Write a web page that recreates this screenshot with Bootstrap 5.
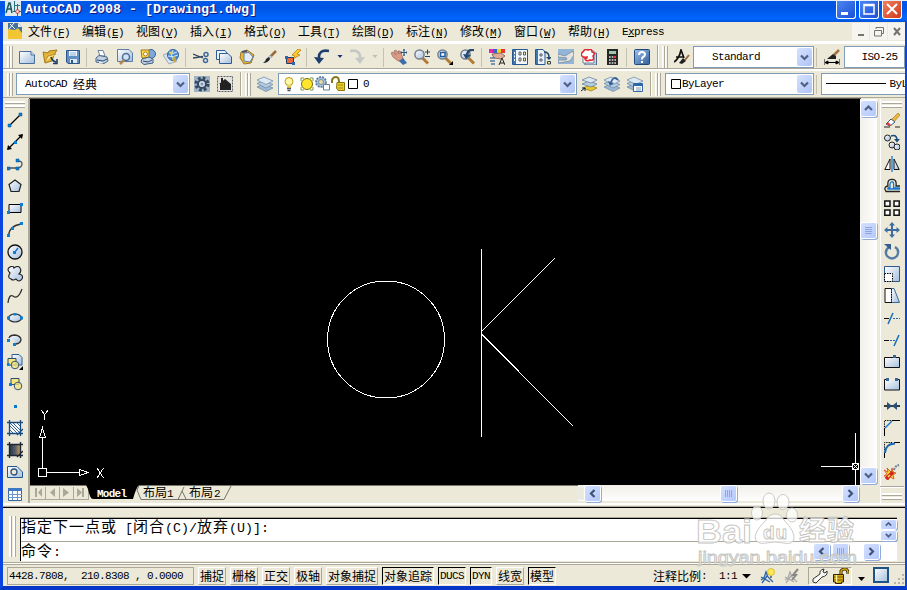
<!DOCTYPE html>
<html lang="zh-CN">
<head>
<meta charset="utf-8">
<meta name="viewport" content="width=device-width, initial-scale=1">
<title>AutoCAD 2008 - [Drawing1.dwg]</title>
<link href="https://cdn.jsdelivr.net/npm/bootstrap@5.3.0/dist/css/bootstrap.min.css" rel="stylesheet">
<style>
:root{--face:#ece9d8;--edge:#aca899;--blue:#7f9db9}
body{width:907px;height:590px;overflow:hidden;background:var(--face);color:#000;font:11px/14px "Liberation Mono","Noto Sans CJK SC",monospace}
.win{width:907px;height:590px;border:solid #0a45e0;border-width:0 2px 4px 3px;border-bottom-color:#0636c8}
.lat{font:11px/14px "Liberation Mono",monospace;letter-spacing:-.6px;white-space:pre}
.zh{font:12px/14px "Noto Sans CJK SC",sans-serif}
.titlebar{height:22px;margin:0 -2px 0 -3px;padding:0 5px 0 5px;border-top:1px solid #e8eefc;background:linear-gradient(#0058e6,#0054e3 30%,#0066ff 85%,#0050d8)}
.titlebar b{font:bold 13.33px/17px "Liberation Mono",monospace;color:#fff;text-shadow:1px 1px #0a1883;margin-left:4px;white-space:pre}
.wbs{gap:3px}
.wb{width:20px;height:18px;border:1px solid #fff;border-top:0;border-radius:0 0 3px 3px;background:linear-gradient(135deg,#4a86f0,#1c4fd8)}
.wb.shut{background:linear-gradient(135deg,#f08060,#d03a18)}
.wb svg,.mb svg,.ic,.sb svg,.dd svg{display:block}
.menubar{height:21px;padding-left:4px;border-bottom:2px solid #fff}
.mitem{width:42px;margin-right:12px;white-space:nowrap}
.mb{width:17px;height:17px;background:#f5f4ee;margin-left:1px}
.bar{height:26px;padding-top:2px;border-bottom:1px solid var(--edge);border-top:1px solid #fff}
.bar2{height:27px;padding-top:1px;border-top:2px solid #fff}
.grip{flex:none;width:6px;height:23px;margin:0 2px 0 4px;background:linear-gradient(90deg,#fff 1px,#f5f3ea 1px 2px,#aca899 2px 3px,#fff 3px 4px,#f5f3ea 4px 5px,#aca899 5px)}
.edge + .grip{margin-left:3px}
.hgrip{width:20px;height:7px;flex:none;background:linear-gradient(#fff 2px,#aca899 2px 3px,transparent 3px 4px,#fff 4px 6px,#aca899 6px)}
.ic{width:16px;height:16px;flex:none;overflow:visible}
.cell{width:23px;flex:none;display:flex;justify-content:center}
.sep{flex:none;width:6.5px;height:19px;background:linear-gradient(90deg,transparent 2px,#c5c2b0 2px 3px,transparent 3px)}
.edge{flex:none;height:25px;width:2px;margin-left:4px;border-left:1px solid var(--edge);background:#fff}
.combo{height:22px;background:#fff;border:1px solid var(--blue);flex:none;overflow:hidden}
.w-ws{width:174px;margin-left:1px;padding-left:8px}.w-lay{width:299px;margin-left:2px}.w-col{width:149px;margin-left:2px}.w-sty{width:121px;padding-left:18px}.w-dim{padding-left:17px}.w-lt{width:88px}
.dd{width:15px;height:18px;flex:none;border-radius:2px;background:linear-gradient(135deg,#d6e2ff,#aec3f5);display:flex;align-items:center;justify-content:center;margin-right:1px}
.work{height:404px}
.side{width:27px;border-right:2px solid var(--edge);padding:2px 1px 0 0}
.side .ic,.rside .ic{margin-bottom:6px}
.rside{width:25px;padding:2px 3px 0 0}
.view{width:830px;background:#000;height:386px}
.vs{width:17px;height:386px;padding:2px 0;background:linear-gradient(90deg,#f2f0ea,#fefefe)}
.vthumb{margin-bottom:124px}
.hthumb{margin-right:107px}
.sb{width:15px;height:15px;flex:none;border-radius:2px;background:linear-gradient(135deg,#d4e0ff,#b3c8fb);box-shadow:0 0 0 1px #fff,1px 1px 0 1px #91abd8;display:flex;align-items:center;justify-content:center}
.sb.half{height:9px}
.vs .sb{margin-right:1px}
.tabs{height:17px}
.tabs svg{overflow:visible}
.hs{width:282px;height:16px;padding-right:2px;background:linear-gradient(#f1efe8,#fefefe)}
.hsplit{width:6px;height:13px;margin-right:1px;background:var(--face)}
.cmdzone{height:59px;border-top:2px solid #fff;padding-top:1px}
.cmdrow{padding-top:8px}
.cmd{height:43px;width:877px;margin-top:2px;border-top:1px solid #000;border-left:1px solid #000;background:#fff;box-shadow:0 -1px #aca899}
.cmd1{height:23px;border-bottom:1px solid var(--edge);padding-right:1px}
.cmd2{height:19px;padding-right:18px}
.cmd2 .far{margin-left:16px}
.cmdl{font:13.33px/14px "Liberation Mono",monospace;white-space:pre}
.cmdl i{font:15px/14px "Noto Sans CJK SC",sans-serif;letter-spacing:1px}
.cmd2 .cmdl{width:794px}
.cmdgrip{width:8px;height:41px;margin:0 3px 0 6px;background:linear-gradient(90deg,#fff 2px,#aca899 2px 3px,transparent 3px 4px,#fff 4px 6px,#aca899 6px 7px,transparent 7px)}
.status{height:22px;padding-left:4px;background:var(--face);border-top:1px solid var(--edge);box-shadow:0 -1px #fff,0 -2px #aca899}
.coord{width:187px;height:18px;border:1px solid var(--edge);padding-left:1px;font:11px/16px "Liberation Mono",monospace;letter-spacing:-.6px;white-space:pre}
.sbtn{height:18px;border:1px solid #fff;border-right-color:#aca899;border-bottom-color:#aca899;display:flex;align-items:center;justify-content:center;margin-right:4px;width:28px;white-space:nowrap;flex:none}
.sbtn.wide{width:52px}.sbtn.slim{width:22px}
.sbtn.on{border-color:#000 #fff #fff #000}
.scale{margin-right:3px}
.tray{width:44px;height:18px;border:1px solid #aca899;border-right-color:#fff;border-bottom-color:#fff}
.logo{position:absolute;left:690px;top:488px;pointer-events:none}
</style>
<script src="https://cdn.jsdelivr.net/npm/bootstrap@5.3.0/dist/js/bootstrap.bundle.min.js"></script>
</head>
<body>
<svg width="0" height="0" class="position-absolute" aria-hidden="true">
<defs>
<linearGradient id="g" x2="1" y2="1"><stop stop-color="#fff"/><stop offset="1" stop-color="#a4bedd"/></linearGradient>
<linearGradient id="gd" x2="1" y2="1"><stop stop-color="#9fc0ea"/><stop offset="1" stop-color="#2f5f9c"/></linearGradient>
<linearGradient id="gk" x2="1"><stop stop-color="#2b3547"/><stop offset=".55" stop-color="#59606e"/><stop offset="1" stop-color="#c99a4a"/></linearGradient>
</defs>
<symbol id="new" viewBox="0 0 16 16"><path d="M.5 2.500H12L15.500 6V14.500H.5Z" fill="url(#g)" stroke="#4a6e9c"/><path d="M12 2.500V6H15.500" fill="#dce8f6" stroke="#4a6e9c"/></symbol>
<symbol id="open" viewBox="0 0 16 16"><path d="M1 3 6 4 7 2 15 1 12 6 10 12 3 14Z" fill="#e3b436" stroke="#a27a1c"/><path d="M3 13 6 7 14 5" fill="#ffe58a" stroke="#b98e2c"/><path d="M9 8Q10 12 14 13M11 14.500H15V10" fill="none" stroke="#1d3d66" stroke-width="1.600"/></symbol>
<symbol id="save" viewBox="0 0 16 16"><path d="M1.500 1.500H14.500V14.500H3L1.500 13Z" fill="#5f8fc4" stroke="#2d5688"/><path d="M4 2H12V7H4Z" fill="#eef5fc"/><path d="M5 10H12V14H5Z" fill="#dce8f4"/><path d="M6 11H8V14H6Z" fill="#2d5688"/><path d="M5 4H11M5 6H11" stroke="#8fb0d4"/></symbol>
<symbol id="print" viewBox="0 0 16 16"><path d="M4 1.500H9L11 7H6Z" fill="#fff" stroke="#69809f"/><path d="M2 9 5 6.500 13 8 14 12 10 14.500 2 13Z" fill="#c4d2e4" stroke="#48648a"/><path d="M3 11 9 12 13 10" fill="none" stroke="#294870"/><path d="M5 13.500 9 14" stroke="#fff"/></symbol>
<symbol id="preview" viewBox="0 0 16 16"><path d="M.5.5H12L15.500 4V12.500H.5Z" fill="url(#g)" stroke="#5a7ca6"/><circle cx="9" cy="8" r="3.500" fill="#cfe3f6" stroke="#506f94" stroke-width="1.500"/><path d="M7 11 3 15" stroke="#b8864a" stroke-width="2.500"/></symbol>
<symbol id="publish" viewBox="0 0 16 16"><circle cx="11" cy="5" r="4.500" fill="#7da8dc" stroke="#3c648f"/><path d="M1 1 9 1 9 9 2 9Z" fill="#ffd84a" stroke="#9a7a18"/><circle cx="5.500" cy="5" r="2" fill="#fff" stroke="#b37f1c"/><path d="M2 10 9 8 13 10 13 14 4 15.500 1 13Z" fill="#c4d2e4" stroke="#3f5a80"/><path d="M3 12 8 13 12 11" fill="none" stroke="#294870"/></symbol>
<symbol id="globe" viewBox="0 0 16 16"><path d="M0 6 8 3 14 12 6 15Z" fill="#dbe5ef" stroke="#9ba9ba"/><circle cx="10" cy="6" r="5.500" fill="#4f8fd9" stroke="#2e5e9b"/><path d="M6 3Q10 6 14 3M5 7Q10 9 15 6M10 1Q7 6 10 11" fill="none" stroke="#d5ebff"/><path d="M9 10 11 7 13 10 12 14Z" fill="#c8a83a"/><circle cx="8" cy="4" r="1.500" fill="#e7cf50"/></symbol>
<symbol id="cut" viewBox="0 0 16 16"><path d="M0 5 10 9M0 9 10 7.500" stroke="#33485f" stroke-width="1.300"/><circle cx="13" cy="5.500" r="2" fill="none" stroke="#3f6a9e" stroke-width="1.500"/><circle cx="12.500" cy="11.500" r="2" fill="none" stroke="#3f6a9e" stroke-width="1.500"/></symbol>
<symbol id="copyd" viewBox="0 0 16 16"><path d="M.5 1.500H9L11 4V10.500H.5Z" fill="#e8f1fb" stroke="#2c5c95"/><path d="M3.500 4.500H12L15.500 8V14.500H3.500Z" fill="url(#g)" stroke="#2c5c95"/></symbol>
<symbol id="paste" viewBox="0 0 16 16"><path d="M2 3 8 1 15 6 12 14 5 15 1 9Z" fill="#e8b53c" stroke="#9a7522"/><path d="M5 4 10 3.500 14 8 11 13 5 12Z" fill="#e4edf7" stroke="#6283a8"/><path d="M3 3 8 2" stroke="#556" stroke-width="2"/></symbol>
<symbol id="brush" viewBox="0 0 16 16"><path d="M8 8 14 2" stroke="#9a6b3e" stroke-width="2.500"/><path d="M9 7 6 10" stroke="#bcc3cb" stroke-width="3"/><path d="M7 8 8 10Q6 14 1 14Q4 12 4 10Z" fill="#20242a"/></symbol>
<symbol id="bolt" viewBox="0 0 16 16"><path d="M13 0 7 6 10 7 6 11 15 6 12 5 16 1Z" fill="#ffc928" stroke="#b07a00" stroke-width=".7"/><path d="M1.500 8.500H8.500V14.500H1.500Z" fill="#e6683c" stroke="#273e63"/><path d="M0 7H3V10H0ZM7 13H10V16H7Z" fill="#2c66b0"/></symbol>
<symbol id="undo" viewBox="0 0 16 16"><path d="M15 2Q4 0 5 10" fill="none" stroke="#1f3e6b" stroke-width="2.600"/><path d="M0 8 10 9 5 15Z" fill="#1f3e6b"/></symbol>
<symbol id="redo" viewBox="0 0 16 16"><path d="M1 2Q12 0 11 10" fill="none" stroke="#c5c7c4" stroke-width="2.600"/><path d="M6 9 16 8 11 15Z" fill="#c5c7c4"/></symbol>
<symbol id="tri" viewBox="0 0 8 16"><path d="M1.500 6H6.500L4 9Z" fill="currentColor"/></symbol>
<symbol id="pan" viewBox="0 0 16 16"><path d="M0 4 2 3 5 6 3 2 5 1 8 5 7 2 9 2 12 9 11 12 7 12 2 8Z" fill="#d99a86" stroke="#8e5b4c" stroke-width=".6"/><path d="M8 12 12 9 16 14 12 16Z" fill="#3e6da8"/><path d="M13 0V7M9.500 3.500H16.500M12 1H14M12 6H14M10.500 2.500V4.500M15.500 2.500V4.500" stroke="#2d5486"/></symbol>
<symbol id="mag" viewBox="0 0 16 16"><path d="M8.500 9 14 14.500" stroke="#b07c35" stroke-width="3"/><circle cx="5.500" cy="5.500" r="4.600" fill="url(#g)" stroke="#737f8c" stroke-width="1.500"/></symbol>
<symbol id="zpm" viewBox="0 0 16 16"><use href="#mag"/><path d="M11 3H16M13.500 .500V5.500M11 7.500H16" stroke="#2c4166"/></symbol>
<symbol id="zwin" viewBox="0 0 16 16"><use href="#mag"/><path d="M3.500 3.500H8V7.500H3.500Z" fill="#fff" stroke="#215c9f" stroke-width="1.500"/><path d="M16 12V16H12Z"/></symbol>
<symbol id="zprev" viewBox="0 0 16 16"><use href="#mag"/><path d="M14 1Q8 0 7 6" fill="none" stroke="#26496f" stroke-width="2.500"/><path d="M3 5 11 6 6 10Z" fill="#26496f"/></symbol>
<symbol id="props" viewBox="0 0 16 16"><path d="M0 0H4V4H0Z" fill="#e826a8"/><path d="M4 0H8V4H4Z" fill="#36c"/><path d="M8 0H12V4H8Z" fill="#f0d020"/><path d="M12 0H16V4H12Z" fill="#e33"/><path d="M3 5 12 4 16 7 12 10 5 9Z" fill="#e0ac96" stroke="#6b463c" stroke-width=".7"/><path d="M1 9H6M1 12H6M2 15H6" stroke="#5679a3" stroke-width="1.500"/><path d="M10 16 13 9 16 16M11 14H15" fill="none" stroke="#222"/></symbol>
<symbol id="dc" viewBox="0 0 16 16"><path d="M.5.5H15.500V15.500H.5Z" fill="#f4f8fd" stroke="#24588f"/><path d="M1 1H4V15H1Z" fill="#3f76b5"/><path d="M7 3H9V6H7ZM11.500 3H13.500V6H11.500ZM7 9H9V12H7ZM11.500 9H13.500V12H11.500Z" fill="#fff3a0" stroke="#4c5f75"/><path d="M2.500 3V13" stroke="#fff" stroke-dasharray="2 1.500"/></symbol>
<symbol id="tp" viewBox="0 0 16 16"><path d="M.5.5H8L10 3V15.500H.5Z" fill="#e9f2fc" stroke="#24588f"/><path d="M1 1H3V15H1Z" fill="#3f76b5"/><path d="M5 5H7V7H5ZM5 10H7V12H5Z" fill="#fff3a0" stroke="#4c5f75"/><path d="M9 3Q14 3 14 8" fill="none" stroke="#24456d" stroke-width="1.500"/><path d="M11 8H17L14 11Z" fill="#24456d"/><path d="M12.500 12.500H15.500V15H12.500Z" fill="#ffe984" stroke="#345"/></symbol>
<symbol id="ssm" viewBox="0 0 16 16"><path d="M0 0H16V15H0Z" fill="#92b5d8"/><path d="M0 5 7 7 15 2 16 6 12 12 1 14 0 11 8 11 9 9 0 8Z" fill="#e1e3e1" stroke="#748291" stroke-width=".7"/></symbol>
<symbol id="mark1" viewBox="0 0 16 16"><path d="M4 4H15.500V16H4Z" fill="#c6d4e3" stroke="#4d6989"/><path d="M2 2H13V14H2Z" fill="#fff" stroke="#6a83a0"/><path d="M2 3Q4-1 7 1Q11-1 11 3Q15 4 12 7Q14 12 9 11Q5 13 4 10Q6 10 6 8Q3 9 1 7Q-1 5 2 3" fill="#fff" stroke="#e22b32" stroke-width="1.600"/></symbol>
<symbol id="calc" viewBox="0 0 16 16"><path d="M3 0H14V16H3Z" fill="#262626"/><path d="M5 2H12V5H5Z" fill="#9cc8a8"/><path d="M5 8H12M5 11H12M5 14H12" stroke="#ddd" stroke-width="1.500" stroke-dasharray="1.700 1"/><path d="M10 7H12V9H10Z" fill="#e33"/></symbol>
<symbol id="help" viewBox="0 0 16 16"><rect x=".5" y=".5" width="15" height="15" rx="1" fill="url(#gd)" stroke="#1f4878"/><path d="M5 6Q5 3 8 3Q11 3 11 5.500Q11 7 9 8Q8 8.500 8 10.500M8 12V14" fill="none" stroke="#fff" stroke-width="2"/></symbol>
<symbol id="tstyle" viewBox="0 0 16 16"><path d="M0 13Q5 10 7 1L10 9M2 8H9" fill="none" stroke="#111" stroke-width="1.700"/><path d="M11 11 15 6" stroke="#9a6b3e" stroke-width="2"/><path d="M9 9 12 12 8 15 5 14Z" fill="#222"/></symbol>
<symbol id="dstyle" viewBox="0 0 16 16"><path d="M0 10V16M16 10V16M1 13.500H15M1 13.500 4 12V15ZM15 13.500 12 12V15Z" stroke="#000"/><path d="M10 6 15 1" stroke="#a5733b" stroke-width="2.500"/><path d="M9 5 12 7V10H3Z" fill="#222"/></symbol>
<symbol id="gear" viewBox="0 0 16 16"><path d="M0 0H16V16H0Z" fill="#9fb2c6"/><circle cx="8" cy="8" r="6" fill="none" stroke="#34495f" stroke-width="3" stroke-dasharray="2.700 2"/><circle cx="8" cy="8" r="4" fill="#d6e1ed" stroke="#34495f" stroke-width="2"/><circle cx="8" cy="8" r="1.500" fill="#8195aa"/></symbol>
<symbol id="home" viewBox="0 0 16 16"><path d="M.5.5H15.500V15.500H.5Z" fill="#e4e4dc" stroke="#56616b" stroke-dasharray="2 1"/><path d="M2 8 8 3 14 8V14H3V8Z" fill="#222"/><path d="M4 2H6V6H4Z" fill="#222"/></symbol>
<symbol id="layers" viewBox="0 0 16 16"><path d="M0 11 7 8 16 12 9 15.500Z" fill="#9db8d2" stroke="#6684a3" stroke-width=".7"/><path d="M0 7.500 7 4.500 16 8.500 9 12Z" fill="#b7cde2" stroke="#6684a3" stroke-width=".7"/><path d="M0 4 7 1 16 5 9 8.500Z" fill="#dce8f3" stroke="#6684a3" stroke-width=".7"/></symbol>
<symbol id="lay1" viewBox="0 0 16 16"><path d="M2 12 9 9 16 12 10 15Z" fill="#e8c72b" stroke="#8d7614" stroke-width=".7"/><path d="M1 8 8 5 16 8 10 11Z" fill="#b7cde2" stroke="#5c7895" stroke-width=".7"/><path d="M1 4 8 1 16 4 10 7Z" fill="#dce8f3" stroke="#5c7895" stroke-width=".7"/><path d="M0 15 4 12M1 12H4V15" stroke="#123" fill="none"/></symbol>
<symbol id="lay2" viewBox="0 0 16 16"><use href="#layers"/><path d="M14 4Q10-1 7 6" fill="none" stroke="#315f96" stroke-width="1.800"/><path d="M4 5 10 7 6 10Z" fill="#315f96"/></symbol>
<symbol id="lay3" viewBox="0 0 16 16"><use href="#layers"/><path d="M6.500 7.500H15.500V15.500H6.500Z" fill="#fff" stroke="#2e67a8"/><path d="M6 8H16V10H6Z" fill="#2e67a8"/><path d="M9 12H14M9 14H14" stroke="#7d96b2"/></symbol>
<symbol id="bulb" viewBox="0 0 12 16"><circle cx="6" cy="5.500" r="4" fill="#fff8a8" stroke="#b89617"/><path d="M4 9H8V12H4Z" fill="#e6cf52"/><path d="M4 12.500H8M4.500 14.500H7.500" stroke="#4f5560" stroke-width="1.500"/></symbol>
<symbol id="sun" viewBox="0 0 16 16"><path d="M2 2H5M11 2H14M2 14H5M11 14H14M2 2V5M14 2V5M2 11V14M14 11V14" stroke="#7d9638"/><circle cx="8" cy="8" r="5.500" fill="#ffe62a" stroke="#776c17"/></symbol>
<symbol id="sunvp" viewBox="0 0 16 16"><circle cx="6" cy="6" r="5" fill="#a9c6df" stroke="#61809e" stroke-dasharray="2 1" stroke-width="1.800"/><circle cx="6" cy="6" r="2.500" fill="#e7dba0" stroke="#7392aa"/><path d="M8.500 8.500H14.500V14H8.500Z" fill="#fff" stroke="#66809b"/></symbol>
<symbol id="lock" viewBox="0 0 16 16"><path d="M1 7V4Q2 1 5 1Q8 1 8 6" fill="none" stroke="#887817" stroke-width="2"/><path d="M6 6.500H13.500V14.500H7L5.500 12Z" fill="#e6cf2d" stroke="#8b770b"/><path d="M7 9H12M7 12H12" stroke="#a28b10"/></symbol>
<symbol id="line" viewBox="0 0 16 16"><path d="M3 13 13 3" stroke="#000" stroke-width="1.300"/><path d="M1 12H4V15H1ZM12 1H15V4H12Z" fill="#0b7fd6" stroke="#075394" stroke-width=".5"/></symbol>
<symbol id="xline" viewBox="0 0 16 16"><path d="M1 15 15 1" stroke="#000" stroke-width="1.200"/><path d="M0 16 1 11 5 15ZM16 0 11 1 15 5Z"/><path d="M7 7H10V10H7Z" fill="#0b7fd6"/></symbol>
<symbol id="pline" viewBox="0 0 16 16"><path d="M2 12H11" stroke="#000"/><path d="M11 12Q15 11 15 8Q15 5 11 5" fill="none" stroke="#555" stroke-width="1.300"/><path d="M0 11H3V14H0ZM9 11H12V14H9ZM9 3H12V6H9Z" fill="#0b7fd6" stroke="#075394" stroke-width=".5"/></symbol>
<symbol id="poly" viewBox="0 0 16 16"><path d="M8 2 14 6.500 12 13.500H4L2 6.500Z" fill="url(#g)" stroke="#222" stroke-width="1.200"/></symbol>
<symbol id="rect" viewBox="0 0 16 16"><path d="M2 4.500H14V12.500H2Z" fill="url(#g)" stroke="#000"/><path d="M0 11H3V14H0ZM13 3H16V6H13Z" fill="#0b7fd6"/></symbol>
<symbol id="arc" viewBox="0 0 16 16"><path d="M1.500 14Q2 4 14 2" fill="none" stroke="#333" stroke-width="1.300"/><path d="M0 12H3V15H0ZM13 0H16V3H13ZM4 5H7V8H4Z" fill="#0b7fd6"/></symbol>
<symbol id="circ" viewBox="0 0 16 16"><circle cx="8" cy="8" r="7" fill="url(#g)" stroke="#111" stroke-width="1.300"/><path d="M8 8 11 4" stroke="#0b6ec0" stroke-width="1.300"/><path d="M6 7H9V10H6Z" fill="#0b7fd6"/></symbol>
<symbol id="cloud" viewBox="0 0 16 16"><path d="M3 7Q-1 3 3 1Q6-1 7 2Q11-1 13 2Q15 5 12 8Q17 9 15 13Q12 17 9 13Q6 15 4 13Q0 12 3 7Z" fill="url(#g)" stroke="#222" stroke-width="1.200"/></symbol>
<symbol id="spl" viewBox="0 0 16 16"><path d="M1 15Q2 6 6 8Q11 12 15 1" fill="none" stroke="#333" stroke-width="1.300"/></symbol>
<symbol id="ell" viewBox="0 0 16 16"><ellipse cx="8" cy="8" rx="6.500" ry="4" fill="url(#g)" stroke="#222" stroke-width="1.200"/><path d="M0 6.500H3V9.500H0ZM13 6.500H16V9.500H13ZM6.500 3H9.500V5.500H6.500Z" fill="#0b7fd6"/></symbol>
<symbol id="ela" viewBox="0 0 16 16"><path d="M2 8Q2 3 8 3Q15 4 14 8Q13 12 8 12L7 8Z" fill="url(#g)"/><path d="M2 6Q3 3 8 3Q14 4 14 8Q13 12 8 12" fill="none" stroke="#333" stroke-width="1.300"/><path d="M0 7H3V10H0ZM6 11H9V14H6Z" fill="#0b7fd6"/></symbol>
<symbol id="ins" viewBox="0 0 16 16"><path d="M5 .500H12L15 3.500V11H5Z" fill="url(#g)" stroke="#2b5d95"/><path d="M1 4.500H9V11H1Z" fill="#f5e67e" stroke="#2b4d72"/><circle cx="8" cy="11" r="3.800" fill="#f0e386" fill-opacity=".8" stroke="#3d566f"/><path d="M0 9H2.500V12H0Z" fill="#0b7fd6"/><path d="M16 12V16H12Z"/></symbol>
<symbol id="blk" viewBox="0 0 16 16"><path d="M4 2.500H12V8.500H4Z" fill="#f5e67e" stroke="#2b4d72"/><circle cx="11" cy="10" r="3.800" fill="#f0e386" fill-opacity=".8" stroke="#3d566f"/><path d="M2 7H5V10H2Z" fill="#0b7fd6"/></symbol>
<symbol id="pt" viewBox="0 0 16 16"><path d="M7 7H10V10H7Z" fill="#0876c9"/></symbol>
<symbol id="hat" viewBox="0 0 16 16"><path d="M3 3H13V13H3Z" fill="#fff"/><path d="M3 6 10 13M3 3 13 13M6 3 13 10M3 10 6 13M10 3 13 6" stroke="#23588e" stroke-width=".9"/><path d="M2.500 0V16M13.500 0V16M0 2.500H16M0 13.500H16M10 15 16 9" stroke="#174b7f" stroke-width="1.300"/></symbol>
<symbol id="gra" viewBox="0 0 16 16"><path d="M3 3H13V13H3Z" fill="url(#gk)"/><path d="M2.500 0V16M13.500 0V16M0 2.500H16M0 13.500H16M10 15 16 9" stroke="#1d2735" stroke-width="1.400"/></symbol>
<symbol id="reg" viewBox="0 0 16 16"><path d="M.500 2.500H10L15.500 8V13.500H.500Z" fill="url(#g)" stroke="#215891"/><circle cx="7" cy="8" r="3" fill="#ece9d8" stroke="#2e5279" stroke-width="1.300"/></symbol>
<symbol id="tab" viewBox="0 0 16 16"><path d="M1.500 2.500H14.500V14.500H1.500Z" fill="#fff" stroke="#2e65a7"/><path d="M1 2H15V5H1Z" fill="#3e77c4"/><path d="M1 8.500H15M1 11.500H15M5.500 5V14M10.500 5V14" stroke="#6d95c8"/></symbol>
<symbol id="erase" viewBox="0 0 16 16"><path d="M6 9 14 1 16 3 9 11Z" fill="#efb638" stroke="#9b6a23" stroke-width=".6"/><path d="M2 12 7 7 11 10 6 14Z" fill="#fff" stroke="#38577c"/><path d="M2 12 4 10 7 13 6 14Z" fill="#d33"/><path d="M0 15H6M11 15H16" stroke="#222"/></symbol>
<symbol id="cpy" viewBox="0 0 16 16"><circle cx="3.500" cy="4" r="3" fill="url(#g)" stroke="#222"/><circle cx="8" cy="11" r="3" fill="url(#g)" stroke="#222"/><circle cx="13" cy="13" r="3" fill="url(#g)" stroke="#222"/><path d="M7 2Q12 0 13 5" fill="none" stroke="#174c83" stroke-width="1.600"/><path d="M10 5H16L13 8.500Z" fill="#174c83"/></symbol>
<symbol id="mir" viewBox="0 0 16 16"><path d="M6 3V13.500H.800Z" fill="#fff" stroke="#111"/><path d="M10 3V13.500H15.200Z" fill="url(#g)" stroke="#111"/><path d="M8 0V16" stroke="#1677d2" stroke-width="1.300"/></symbol>
<symbol id="off" viewBox="0 0 16 16"><path d="M16 13.500H2Q-1 9 4 8Q3 1 8 1.500Q13 1 12 8H16" fill="none" stroke="#222" stroke-width="1.300"/><path d="M16 11H4Q3 10 6 9.500V6Q7 3 9 4Q10 5 9.500 10H16" fill="none" stroke="#1677d2" stroke-width="1.300"/></symbol>
<symbol id="arr" viewBox="0 0 16 16"><path d="M.800 1H6V6.200H.800ZM10 1H15.200V6.200H10ZM.800 10H6V15.200H.800ZM10 10H15.200V15.200H10Z" fill="#fff" stroke="#111" stroke-width="1.500"/></symbol>
<symbol id="mov" viewBox="0 0 16 16"><path d="M8 0 11 3.500H9V7H12.500V5L16 8 12.500 11V9H9V12.500H11L8 16 5 12.500H7V9H3.500V11L0 8 3.500 5V7H7V3.500H5Z" fill="#3f6c9e"/></symbol>
<symbol id="rot" viewBox="0 0 16 16"><path d="M5 3Q0 7 3 12Q8 17 13 12Q16 6 11 3" fill="none" stroke="#527aa6" stroke-width="2.300"/><path d="M0 0H7V6Z" fill="#315d91"/></symbol>
<symbol id="scl" viewBox="0 0 16 16"><path d="M.500.500H15.500V15.500H.500Z" fill="url(#g)" stroke="#2d5b8c"/><path d="M.500 7.500H8.500V15.500H.500Z" fill="#fff" stroke="#000" stroke-dasharray="1.500 1"/></symbol>
<symbol id="str" viewBox="0 0 16 16"><path d="M7 .500H10L15.500 14.500H7Z" fill="url(#g)" stroke="#3a679b"/><path d="M7 .500H1V14.500H7" fill="#fff" stroke="#111"/><path d="M7.500 1V15" stroke="#000" stroke-dasharray="1.500 1"/></symbol>
<symbol id="trim" viewBox="0 0 16 16"><path d="M0 8.500H5" stroke="#111"/><path d="M9 8.500H16" stroke="#176bb8" stroke-dasharray="2 1"/><path d="M4 14 9 3" stroke="#176bb8" stroke-width="1.500"/></symbol>
<symbol id="ext" viewBox="0 0 16 16"><path d="M0 8.500H5" stroke="#111"/><path d="M6 8.500H12" stroke="#176bb8" stroke-dasharray="2 1"/><path d="M10 14 15 3" stroke="#176bb8" stroke-width="1.500"/></symbol>
<symbol id="brk1" viewBox="0 0 16 16"><path d="M.500 3.500H15.500V13.500H.500Z" fill="url(#g)" stroke="#111"/><path d="M9 1H12V4H9Z" fill="#376797"/></symbol>
<symbol id="brk2" viewBox="0 0 16 16"><path d="M4 3.500H.500V14H15.500V3.500H12" fill="url(#g)" stroke="#111"/><path d="M2 2H5V5H2ZM11 2H14V5H11Z" fill="#376797"/></symbol>
<symbol id="join" viewBox="0 0 16 16"><path d="M0 8H16" stroke="#000" stroke-width="1.500"/><path d="M3 4 8 8 3 12ZM13 4 8 8 13 12Z" fill="#274f77"/></symbol>
<symbol id="cham" viewBox="0 0 16 16"><path d="M.5 7V.500H9" fill="none" stroke="#000" stroke-dasharray="1.300 1"/><path d="M.5 16V8M8 .500H16" stroke="#000"/><path d="M1 8 8 1" stroke="#1677d2" stroke-width="1.500"/></symbol>
<symbol id="fil" viewBox="0 0 16 16"><path d="M.5 8V.500H8" fill="none" stroke="#000" stroke-dasharray="1.300 1"/><path d="M.5 16V10M10 .500H16" stroke="#000"/><path d="M1 11Q1 2 11 1.500" fill="none" stroke="#1b67ad" stroke-width="2"/></symbol>
<symbol id="expl" viewBox="0 0 16 16"><path d="M0 6 4 8 3 4 7 8 8 4 9 8 12 9 9 11 10 15 6 13 4 16 4 12 0 12 3 10Z" fill="#f9d52b" stroke="#c93a17" stroke-width=".7"/><path d="M2 15 9 8" stroke="#d42222" stroke-width="3.500"/><path d="M4 13 6 11" stroke="#ffe85a" stroke-width="1.500"/><path d="M10 6Q11 2 15 1" fill="none" stroke="#6c7b91" stroke-width="2" stroke-dasharray="2 1"/></symbol>
<symbol id="ann" viewBox="0 0 16 16"><path d="M1 12 4 10 6 4 8 9 13 14M1 9 10 14M2 15 7 8" fill="none" stroke="#2b64a5" stroke-width="1.300"/><circle cx="11" cy="4" r="3.500" fill="#ffe94f" stroke="#c3a019" stroke-width=".6"/><path d="M10 8H12V10H10Z" fill="#777"/></symbol>
<symbol id="ann2" viewBox="0 0 16 16"><path d="M1 12 4 10 6 4 8 9 13 14M1 9 10 14M2 15 7 8" fill="none" stroke="#aaa" stroke-width="1.300"/><path d="M14 1 9 7H12L8 12" fill="none" stroke="#888" stroke-width="2"/></symbol>
<symbol id="wr" viewBox="0 0 16 16"><path d="M1 14 1 11 8 6Q7 2 12 1L11 4 13 5 15 3Q16 8 10 9L4 15Z" fill="#f8f8f4" stroke="#333"/></symbol>
<symbol id="goldlock" viewBox="0 0 16 16"><path d="M8 7V3Q9 1 12 1Q15 1 15 6" fill="none" stroke="#2e2400" stroke-width="3"/><path d="M8 7V3Q9 1 12 1Q15 1 15 6" fill="none" stroke="#d3a416" stroke-width="1.500"/><path d="M.500 6.500H10.500V14H8.500V15.500H2.500V14H.500Z" fill="#d9a816" stroke="#2e2400"/><path d="M1 9H10M1 12H10" stroke="#775a05"/><path d="M3.500 7V14" stroke="#fff3a0" stroke-width="1.500"/></symbol>
<symbol id="down" viewBox="0 0 9 9"><path d="M1 2.500 4.500 6 8 2.500" fill="none" stroke="#4d6185" stroke-width="2.200"/></symbol>
<symbol id="up" viewBox="0 0 9 9"><path d="M1 6 4.500 2.500 8 6" fill="none" stroke="#4d6185" stroke-width="2.200"/></symbol>
<symbol id="lf" viewBox="0 0 9 9"><path d="M6.500 1 3 4.500 6.500 8" fill="none" stroke="#3f5278" stroke-width="2.200"/></symbol>
<symbol id="rt" viewBox="0 0 9 9"><path d="M2.500 1 6 4.500 2.500 8" fill="none" stroke="#3f5278" stroke-width="2.200"/></symbol>
<symbol id="thumb" viewBox="0 0 9 9"><path d="M1.500 1V8M3.500 1V8M5.500 1V8M7.500 1V8" stroke="#8da6e0"/></symbol>
</svg>

<main class="win d-flex flex-column">
<header class="titlebar d-flex flex-shrink-0">
<svg width="16" height="15" viewBox="0 0 16 15"><path d="M0 0H16V15H0Z" fill="#dfe9ea"/><path d="M1 12 4 2H5L7 12M2 8H7" fill="none" stroke="#195864" stroke-width="1.500"/><path d="M9.500 0V10M12.500 3V15M8 10.500H16M9 4.500H15" stroke="#2b7480"/><path d="M11 9H14V12H11Z" fill="#fff" stroke="#c33" stroke-width=".8"/></svg>
<b>AutoCAD 2008 - [Drawing1.dwg]</b>
<div class="wbs d-flex ms-auto">
<div class="wb"><svg width="18" height="17"><path d="M4 12.500H11" stroke="#fff" stroke-width="3"/></svg></div>
<div class="wb"><svg width="18" height="17"><path d="M4 3.500H14V13H4ZM4 4.500H14" fill="none" stroke="#fff" stroke-width="1.500"/></svg></div>
<div class="wb shut"><svg width="18" height="17"><path d="M4 3 14 13M14 3 4 13" stroke="#fff" stroke-width="2"/></svg></div>
</div>
</header>

<nav class="menubar d-flex align-items-center flex-shrink-0">
<svg class="me-1 flex-shrink-0" width="17" height="17" viewBox="0 0 17 17"><path d="M1 0H11L15 4V16H1Z" fill="#42729d"/><path d="M1 6 8 7 11 5 15 10V16H1Z" fill="#f1c632"/><path d="M3 1 8 6M7 0 2 6" stroke="#fff"/><path d="M11 0V4H15" fill="#e4edf4"/></svg>
<div class="mitem"><span class="zh">文件</span><span class="lat">(<u>F</u>)</span></div>
<div class="mitem"><span class="zh">编辑</span><span class="lat">(<u>E</u>)</span></div>
<div class="mitem"><span class="zh">视图</span><span class="lat">(<u>V</u>)</span></div>
<div class="mitem"><span class="zh">插入</span><span class="lat">(<u>I</u>)</span></div>
<div class="mitem"><span class="zh">格式</span><span class="lat">(<u>O</u>)</span></div>
<div class="mitem"><span class="zh">工具</span><span class="lat">(<u>T</u>)</span></div>
<div class="mitem"><span class="zh">绘图</span><span class="lat">(<u>D</u>)</span></div>
<div class="mitem"><span class="zh">标注</span><span class="lat">(<u>N</u>)</span></div>
<div class="mitem"><span class="zh">修改</span><span class="lat">(<u>M</u>)</span></div>
<div class="mitem"><span class="zh">窗口</span><span class="lat">(<u>W</u>)</span></div>
<div class="mitem"><span class="zh">帮助</span><span class="lat">(<u>H</u>)</span></div>
<span class="lat">E<u>x</u>press</span>
<div class="d-flex ms-auto">
<div class="mb"><svg width="17" height="17"><path d="M6 12H12" stroke="#777468" stroke-width="2"/></svg></div>
<div class="mb"><svg width="17" height="17"><path d="M6 6V4.500H13.500V10.500H12M4.500 7.500H11.500V13H4.500Z" fill="none" stroke="#77746b"/></svg></div>
<div class="mb"><svg width="17" height="17"><path d="M6 5 12 12M12 5 6 12" stroke="#77746b" stroke-width="2"/></svg></div>
</div>
</nav>

<div class="bar d-flex align-items-center flex-shrink-0 overflow-hidden">
<div class="grip"></div><div class="cell"><svg class="ic"><use href="#new"/></svg></div>
<div class="cell"><svg class="ic"><use href="#open"/></svg></div><div class="cell"><svg class="ic"><use href="#save"/></svg></div><div class="sep"></div>
<div class="cell"><svg class="ic"><use href="#print"/></svg></div><div class="cell"><svg class="ic"><use href="#preview"/></svg></div><div class="cell"><svg class="ic"><use href="#publish"/></svg></div><div class="cell"><svg class="ic"><use href="#globe"/></svg></div><div class="sep"></div>
<div class="cell"><svg class="ic"><use href="#cut"/></svg></div><div class="cell"><svg class="ic"><use href="#copyd"/></svg></div><div class="cell"><svg class="ic"><use href="#paste"/></svg></div><div class="cell"><svg class="ic"><use href="#brush"/></svg></div><div class="cell"><svg class="ic"><use href="#bolt"/></svg></div><div class="sep"></div>
<div class="cell"><svg class="ic"><use href="#undo"/></svg></div><svg class="flex-shrink-0" width="12" height="16"><use href="#tri" color="#1c2e78"/></svg>
<div class="cell"><svg class="ic"><use href="#redo"/></svg></div><svg class="flex-shrink-0" width="12" height="16"><use href="#tri" color="#bbb"/></svg><div class="sep"></div>
<div class="cell"><svg class="ic"><use href="#pan"/></svg></div><div class="cell"><svg class="ic"><use href="#zpm"/></svg></div><div class="cell"><svg class="ic"><use href="#zwin"/></svg></div><div class="cell"><svg class="ic"><use href="#zprev"/></svg></div><div class="sep"></div>
<div class="cell"><svg class="ic"><use href="#props"/></svg></div><div class="cell"><svg class="ic"><use href="#dc"/></svg></div><div class="cell"><svg class="ic"><use href="#tp"/></svg></div><div class="cell"><svg class="ic"><use href="#ssm"/></svg></div><div class="cell"><svg class="ic"><use href="#mark1"/></svg></div><div class="cell"><svg class="ic"><use href="#calc"/></svg></div><div class="sep"></div>
<div class="cell"><svg class="ic"><use href="#help"/></svg></div><div class="edge"></div><div class="grip"></div>
<div class="cell"><svg class="ic"><use href="#tstyle"/></svg></div>
<div class="combo w-sty d-flex align-items-center"><span class="lat flex-fill">Standard</span><div class="dd"><svg width="9" height="9"><use href="#down"/></svg></div></div>
<div class="sep"></div><div class="cell"><svg class="ic"><use href="#dstyle"/></svg></div>
<div class="combo w-dim d-flex align-items-center flex-fill"><span class="lat">ISO-25</span></div>
</div>

<div class="bar2 d-flex align-items-center flex-shrink-0 overflow-hidden">
<div class="grip"></div>
<div class="combo w-ws d-flex align-items-center"><span class="lat">AutoCAD </span><span class="zh flex-fill">经典</span><div class="dd"><svg width="9" height="9"><use href="#down"/></svg></div></div>
<div class="cell"><svg class="ic"><use href="#gear"/></svg></div><div class="cell"><svg class="ic"><use href="#home"/></svg></div>
<div class="edge"></div><div class="grip"></div>
<div class="cell"><svg class="ic"><use href="#layers"/></svg></div>
<div class="combo w-lay d-flex align-items-center ps-1"><svg class="flex-shrink-0" width="12" height="16"><use href="#bulb"/></svg><svg class="ic ms-1"><use href="#sun"/></svg><svg class="ic"><use href="#sunvp"/></svg><svg class="ic"><use href="#lock"/></svg><svg class="flex-shrink-0" width="12" height="12"><path d="M1.500 1.500H10.500V10.500H1.500Z" fill="#fff" stroke="#000"/></svg><span class="lat flex-fill ps-1">0</span><div class="dd"><svg width="9" height="9"><use href="#down"/></svg></div></div>
<div class="cell"><svg class="ic"><use href="#lay1"/></svg></div><div class="cell"><svg class="ic"><use href="#lay2"/></svg></div><div class="cell"><svg class="ic"><use href="#lay3"/></svg></div>
<div class="edge"></div><div class="grip"></div>
<div class="combo w-col d-flex align-items-center ps-1"><svg class="flex-shrink-0" width="12" height="12"><path d="M1.500 1.500H10.500V10.500H1.500Z" fill="#fff" stroke="#000"/></svg><span class="lat flex-fill">ByLayer</span><div class="dd"><svg width="9" height="9"><use href="#down"/></svg></div></div>
<div class="sep"></div>
<div class="combo w-lt d-flex align-items-center"><svg class="flex-shrink-0 ms-1" width="60" height="2"><path d="M0 .5H60" stroke="#000"/></svg><span class="lat ps-1">ByLayer</span></div>
</div>

<svg class="d-block flex-shrink-0" width="902" height="3"><path d="M0 1.500H902" stroke="#aca899"/><path d="M26 2.500H858" stroke="#55534b"/></svg>

<section class="work d-flex flex-shrink-0">
<aside class="side d-flex flex-column align-items-center flex-shrink-0">
<div class="hgrip mb-1"></div>
<svg class="ic"><use href="#line"/></svg><svg class="ic"><use href="#xline"/></svg><svg class="ic"><use href="#pline"/></svg><svg class="ic"><use href="#poly"/></svg><svg class="ic"><use href="#rect"/></svg><svg class="ic"><use href="#arc"/></svg><svg class="ic"><use href="#circ"/></svg><svg class="ic"><use href="#cloud"/></svg><svg class="ic"><use href="#spl"/></svg><svg class="ic"><use href="#ell"/></svg><svg class="ic"><use href="#ela"/></svg><svg class="ic"><use href="#ins"/></svg><svg class="ic"><use href="#blk"/></svg><svg class="ic"><use href="#pt"/></svg><svg class="ic"><use href="#hat"/></svg><svg class="ic"><use href="#gra"/></svg><svg class="ic"><use href="#reg"/></svg><svg class="ic mb-0"><use href="#tab"/></svg>
</aside>
<div class="d-flex flex-column flex-shrink-0">
<div class="d-flex">
<svg class="view d-block" viewBox="30 99 830 386" fill="none" stroke="#fff" shape-rendering="crispEdges">
<circle cx="386" cy="339.500" r="58.500"/><path d="M481.500 249V437M555 258 481.500 331.500M481.500 334 573 426"/>
<path d="M38.500 468.500H46.500V476.500H38.500ZM42.500 468V438M46 472.500H79M42.500 428 39.500 437.500H45.500ZM88 472.500 79.500 469.500V475.500ZM44.500 415V420M41.500 410 44.500 415 48 410M97 468 103.500 478M103.500 468 97 478"/>
<path d="M821 466.500H852M855.500 433V463M855.500 470V485M852.500 463.500H858.500V469.500H852.500ZM853 464 858 469M858 464 853 469"/>
</svg>
<div class="vs d-flex flex-column align-items-center justify-content-between"><div class="sb"><svg width="9" height="9"><use href="#up"/></svg></div><div class="sb vthumb"><svg width="9" height="9"><path d="M1 1.500H8M1 3.500H8M1 5.500H8M1 7.500H8" stroke="#8da6e0"/></svg></div><div class="sb"><svg width="9" height="9"><use href="#down"/></svg></div></div>
</div>
<div class="tabs d-flex">
<svg class="d-block flex-shrink-0" width="548" height="17" viewBox="30 485 548 17">
<path d="M30 485.500H578" stroke="#77746b"/>
<g fill="none" stroke="#aca899"><path d="M45.500 487V499M59.500 487V499M73.500 487V499M88.500 487V499M31 499.500H89"/></g>
<g fill="#aca899"><path d="M35 488H37V497H35ZM42 488V497L38 492.500ZM55 488V497L50 492.500ZM63 488V497L69 492.500ZM77 488V497L82 492.500ZM82 488H84V497H82Z"/></g>
<path d="M86 485H139Q136 488 133 499H93Q90 499 88 489Z" fill="#000"/>
<path d="M139 486 137 490 141 499.500H178L184 487M178 499.500H224L231 486M182 491 186 499" fill="none" stroke="#77746b"/>
<g font-family="Liberation Mono,monospace" font-size="11"><text x="97" y="497" fill="#fff" font-weight="bold" textLength="30">Model</text><text x="167" y="497">1</text><text x="214" y="497">2</text></g>
<g font-family="Noto Sans CJK SC,sans-serif" font-size="12"><text x="143" y="497">布局</text><text x="189" y="497">布局</text></g>
</svg>
<div class="hs d-flex align-items-center"><span class="hsplit border border-secondary-subtle"></span><div class="sb"><svg width="9" height="9"><use href="#lf"/></svg></div><div class="sb hthumb ms-auto"><svg width="9" height="9"><use href="#thumb"/></svg></div><div class="sb"><svg width="9" height="9"><use href="#rt"/></svg></div></div>
</div>
</div>
<aside class="rside d-flex flex-column align-items-center border-start border-white flex-shrink-0 ms-auto">
<div class="hgrip mb-1"></div>
<svg class="ic"><use href="#erase"/></svg><svg class="ic"><use href="#cpy"/></svg><svg class="ic"><use href="#mir"/></svg><svg class="ic"><use href="#off"/></svg><svg class="ic"><use href="#arr"/></svg><svg class="ic"><use href="#mov"/></svg><svg class="ic"><use href="#rot"/></svg><svg class="ic"><use href="#scl"/></svg><svg class="ic"><use href="#str"/></svg><svg class="ic"><use href="#trim"/></svg><svg class="ic"><use href="#ext"/></svg><svg class="ic"><use href="#brk1"/></svg><svg class="ic"><use href="#brk2"/></svg><svg class="ic"><use href="#join"/></svg><svg class="ic"><use href="#cham"/></svg><svg class="ic"><use href="#fil"/></svg><svg class="ic"><use href="#expl"/></svg>
<svg class="flex-shrink-0" width="24" height="3"><path d="M0 .5H24" stroke="#aca899"/><path d="M0 1.500H24" stroke="#fff"/></svg><div class="hgrip mt-1"></div>
</aside>
</section>

<section class="cmdzone flex-shrink-0">
<svg class="d-block" width="902" height="2"><path d="M0 .5H902" stroke="#aca899"/><path d="M0 1.500H902" stroke="#000"/></svg>
<div class="cmdrow d-flex">
<div class="cmdgrip"></div>
<div class="cmd">
<div class="cmd1 d-flex"><div class="cmdl flex-fill"><i>指定下一点或</i> [<i>闭合</i>(C)/<i>放弃</i>(U)]:</div><div class="d-flex flex-column justify-content-around"><div class="sb half"><svg width="7" height="7"><use href="#up"/></svg></div><div class="sb half"><svg width="7" height="7"><use href="#down"/></svg></div></div></div>
<div class="cmd2 d-flex align-items-center"><div class="cmdl"><i>命令</i>:</div><div class="sb"><svg width="9" height="9"><use href="#lf"/></svg></div><div class="sb ms-1"><svg width="9" height="9"><use href="#thumb"/></svg></div><div class="sb far"><svg width="9" height="9"><use href="#rt"/></svg></div></div>
</div>
</div>
</section>

<footer class="status d-flex align-items-center mt-auto flex-shrink-0">
<div class="coord flex-shrink-0 me-1">4428.7808,  210.8308 , 0.0000</div>
<div class="sbtn zh">捕捉</div><div class="sbtn zh">栅格</div><div class="sbtn zh">正交</div><div class="sbtn zh">极轴</div><div class="sbtn wide zh">对象捕捉</div><div class="sbtn wide zh on">对象追踪</div><div class="sbtn on lat">DUCS</div><div class="sbtn slim on lat">DYN</div><div class="sbtn zh">线宽</div><div class="sbtn on zh">模型</div>
<div class="d-flex align-items-center ms-auto">
<span class="zh">注释比例</span><span class="lat scale">:  1:1</span><svg width="16" height="16"><path d="M2 6H11L6.500 10.500Z"/></svg>
<svg class="ic ms-1"><use href="#ann"/></svg><svg class="ic mx-2"><use href="#ann2"/></svg>
<div class="tray d-flex align-items-center justify-content-around"><svg class="ic"><use href="#wr"/></svg><svg class="ic"><use href="#goldlock"/></svg></div>
<svg width="20" height="16"><path d="M6 9H13L9.500 13Z"/></svg>
<svg width="18" height="17"><path d="M2 1H16V15H2Z" fill="url(#g)" stroke="#1f5285" stroke-width="2"/></svg>
<svg width="15" height="18"><path d="M12 7H14V9H12ZM8 11H10V13H8ZM12 11H14V13H12ZM4 15H6V17H4ZM8 15H10V17H8ZM12 15H14V17H12Z" fill="#b8b4a2"/></svg>
</div>
</footer>
</main>

<svg class="logo" width="175" height="84" viewBox="690 488 175 84" fill="#fff" fill-opacity=".75" stroke="#c4c4c0" stroke-width=".9">
<ellipse cx="769" cy="501" rx="6" ry="8"/><ellipse cx="783" cy="502" rx="6" ry="7.500"/><ellipse cx="757" cy="513" rx="5.500" ry="7"/><ellipse cx="792" cy="515" rx="5.500" ry="7"/>
<path d="M775 514Q781 514 784 520Q795 531 794 539Q792 545 784 543Q775 541 766 543Q756 545 755 537Q756 530 766 520Q769 514 775 514Z"/>
<g font-family="Liberation Sans,sans-serif" font-weight="bold"><text x="696" y="543" font-size="34" textLength="56" lengthAdjust="spacingAndGlyphs">Bai</text><text x="763" y="539" font-size="19" textLength="24">du</text></g>
<text x="799" y="540" font-family="Noto Sans CJK SC,sans-serif" font-weight="bold" font-size="27" textLength="55">经验</text>
<text x="698" y="563" font-family="Liberation Sans,sans-serif" font-size="17" textLength="159" lengthAdjust="spacingAndGlyphs">jingyan.baidu.com</text>
</svg>
</body>
</html>
